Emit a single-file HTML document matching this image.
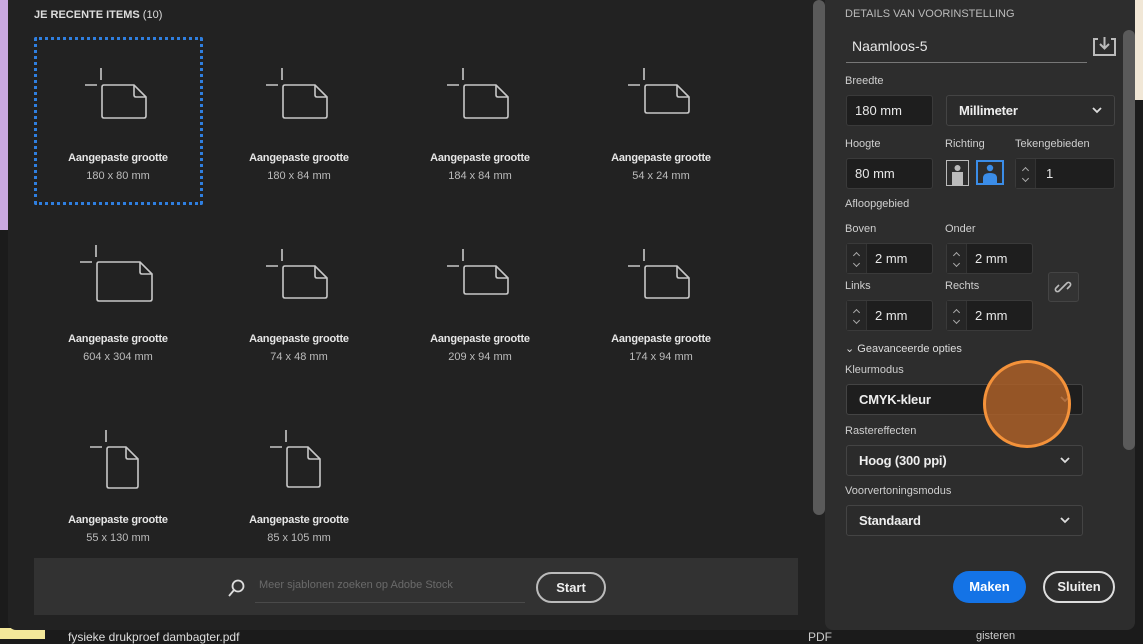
<!DOCTYPE html>
<html><head><meta charset="utf-8"><style>
*{margin:0;padding:0;box-sizing:border-box}
body{width:1143px;height:639px;overflow:hidden;background:#1b1b1b;font-family:"Liberation Sans",sans-serif;position:relative;color:#ddd}
.a{position:absolute}
.lbl{font-size:11px;color:#e6e6e6;text-align:center;width:180px;font-weight:bold;letter-spacing:-0.2px}
.sub{font-size:11px;color:#bcbcbc;text-align:center;width:180px}
.rl{position:absolute;font-size:11px;color:#cfcfcf}
.inp{position:absolute;background:#1e1e1e;border:1px solid #3a3a3a;border-radius:3px;font-size:13px;color:#e8e8e8;padding-left:8px;display:flex;align-items:center}
.dd{position:absolute;border:1px solid #444;border-radius:3px;background:#2b2b2b;font-size:13px;color:#eee;font-weight:bold;padding-left:12px;display:flex;align-items:center;letter-spacing:-0.2px}
.chev{position:absolute;right:12px;top:50%;margin-top:-4px}
.step{position:absolute;left:0;top:0;width:20px;height:100%;border-right:1px solid #333;background:#262626}
.step::before{content:"";position:absolute;left:7px;top:9px;width:4px;height:4px;border-left:1.3px solid #aaa;border-top:1.3px solid #aaa;transform:rotate(45deg)}
.step::after{content:"";position:absolute;left:7px;top:17px;width:4px;height:4px;border-right:1.3px solid #aaa;border-bottom:1.3px solid #aaa;transform:rotate(45deg)}
</style></head><body>
<div class="a" style="left:0;top:0;width:8px;height:230px;background:#c9a8e0"></div>
<div class="a" style="left:0;top:628px;width:45px;height:11px;background:#f3e79a"></div>
<div class="a" style="left:1135px;top:0;width:8px;height:100px;background:#f1e7d6"></div>
<div class="a" style="left:8px;top:0;width:1127px;height:630px;background:#222;border-radius:0 0 8px 8px"></div>
<div class="a" style="left:68px;top:630px;font-size:12px;color:#ddd">fysieke drukproef dambagter.pdf</div>
<div class="a" style="left:808px;top:630px;font-size:12px;color:#ccc">PDF</div>
<div class="a" style="left:976px;top:630px;font-size:11px;color:#ccc">gisteren</div>
<div class="a" style="left:34px;top:9px;font-size:11px;color:#ddd;font-weight:bold">JE RECENTE ITEMS <span style="font-weight:normal">(10)</span></div>
<div class="a" style="left:34px;top:37px;width:169px;height:168px;border:3px dotted #2f7fe0;border-radius:2px"></div>
<svg class="a" style="left:0;top:0" width="810" height="560" fill="none" stroke="#c8c8c8" stroke-width="1.6">
<g id="ic"></g>
</svg>
<div id="tiles"></div>
<div class="a" style="left:813px;top:0;width:12px;height:515px;background:#5a5a5a;border-radius:6px"></div>
<div class="a" style="left:825px;top:0;width:310px;height:630px;background:#2d2d2d;border-radius:0 0 8px 8px"></div>
<div class="a" style="left:1123px;top:30px;width:12px;height:420px;background:#5a5a5a;border-radius:6px"></div>
<div class="a" style="left:34px;top:558px;width:764px;height:57px;background:#323232"></div>
<svg class="a" style="left:227px;top:578px" width="20" height="20" fill="none" stroke="#ddd" stroke-width="1.8"><circle cx="11" cy="8" r="5.5"/><path d="M7 12 2 18"/></svg>
<div class="a" style="left:259px;top:579px;font-size:11px;color:#6a6a6a">Meer sjablonen zoeken op Adobe Stock</div>
<div class="a" style="left:255px;top:602px;width:270px;height:1px;background:#4a4a4a"></div>
<div class="a" style="left:536px;top:572px;width:70px;height:31px;border:2px solid #bbb;border-radius:16px;font-size:13px;font-weight:bold;color:#eee;text-align:center;line-height:27px">Start</div>

<div class="rl" style="left:845px;top:8px;color:#bbb">DETAILS VAN VOORINSTELLING</div>
<div class="a" style="left:852px;top:38px;font-size:14px;color:#e8e8e8">Naamloos-5</div>
<div class="a" style="left:846px;top:62px;width:241px;height:1px;background:#777"></div>
<svg class="a" style="left:1093px;top:36px" width="23" height="20" fill="none" stroke="#bbb" stroke-width="2"><path d="M5 3H1v16h21V3h-4M11.5 1v11M7 8l4.5 4.5L16 8"/></svg>
<div class="rl" style="left:845px;top:75px">Breedte</div>
<div class="inp" style="left:846px;top:95px;width:87px;height:31px">180 mm</div>
<div class="dd" style="left:946px;top:95px;width:169px;height:31px">Millimeter<svg class="chev" width="10" height="7" fill="none" stroke="#ddd" stroke-width="1.8"><path d="M1 1l4 4 4-4"/></svg></div>
<div class="rl" style="left:845px;top:138px">Hoogte</div>
<div class="rl" style="left:945px;top:138px">Richting</div>
<div class="rl" style="left:1015px;top:138px">Tekengebieden</div>
<div class="inp" style="left:846px;top:158px;width:87px;height:31px">80 mm</div>
<svg class="a" style="left:946px;top:160px" width="60" height="26"><rect x="0.5" y="0.5" width="22" height="25" fill="none" stroke="#bbb"/><circle cx="11.5" cy="8" r="3" fill="#bbb"/><rect x="6" y="12" width="11" height="13" fill="#bbb"/><rect x="31" y="1" width="26" height="23" fill="none" stroke="#3b8de8" stroke-width="2"/><circle cx="44" cy="8" r="3.2" fill="#3b8de8"/><path d="M37 23v-5q0-5 7-5t7 5v5z" fill="#3b8de8"/></svg>
<div class="inp" style="left:1015px;top:158px;width:100px;height:31px;padding-left:30px"><div class="step"></div>1</div>
<div class="rl" style="left:845px;top:198px">Afloopgebied</div>
<div class="rl" style="left:845px;top:223px">Boven</div>
<div class="rl" style="left:945px;top:223px">Onder</div>
<div class="inp" style="left:846px;top:243px;width:87px;height:31px;padding-left:28px"><div class="step"></div>2 mm</div>
<div class="inp" style="left:946px;top:243px;width:87px;height:31px;padding-left:28px"><div class="step"></div>2 mm</div>
<div class="rl" style="left:845px;top:280px">Links</div>
<div class="rl" style="left:945px;top:280px">Rechts</div>
<div class="inp" style="left:846px;top:300px;width:87px;height:31px;padding-left:28px"><div class="step"></div>2 mm</div>
<div class="inp" style="left:946px;top:300px;width:87px;height:31px;padding-left:28px"><div class="step"></div>2 mm</div>
<div class="a" style="left:1048px;top:272px;width:31px;height:30px;border:1px solid #444;border-radius:3px;background:#333"></div>
<svg class="a" style="left:1054px;top:278px" width="18" height="18" fill="none" stroke="#bbb" stroke-width="1.6"><path d="M8 10l-3 3a2 2 0 0 1-3-3l3-3M10 8l3-3a2 2 0 0 1 3 3l-3 3M7 11l4-4"/></svg>
<div class="rl" style="left:845px;top:342px;color:#ddd">⌄ Geavanceerde opties</div>
<div class="rl" style="left:845px;top:364px">Kleurmodus</div>
<div class="dd" style="left:846px;top:384px;width:237px;height:31px;background:#1e1e1e">CMYK-kleur<svg class="chev" width="10" height="7" fill="none" stroke="#ddd" stroke-width="1.8"><path d="M1 1l4 4 4-4"/></svg></div>
<div class="rl" style="left:845px;top:425px">Rastereffecten</div>
<div class="dd" style="left:846px;top:445px;width:237px;height:31px">Hoog (300 ppi)<svg class="chev" width="10" height="7" fill="none" stroke="#ddd" stroke-width="1.8"><path d="M1 1l4 4 4-4"/></svg></div>
<div class="rl" style="left:845px;top:485px">Voorvertoningsmodus</div>
<div class="dd" style="left:846px;top:505px;width:237px;height:31px">Standaard<svg class="chev" width="10" height="7" fill="none" stroke="#ddd" stroke-width="1.8"><path d="M1 1l4 4 4-4"/></svg></div>
<div class="a" style="left:983px;top:360px;width:88px;height:88px;border-radius:50%;background:rgba(170,95,40,0.85);border:3px solid #f4923a"></div>
<div class="a" style="left:953px;top:571px;width:73px;height:32px;border-radius:16px;background:#1473e6;color:#fff;font-size:13px;font-weight:bold;text-align:center;line-height:32px">Maken</div>
<div class="a" style="left:1043px;top:571px;width:72px;height:32px;border-radius:16px;border:2px solid #ddd;color:#eee;font-size:13px;font-weight:bold;text-align:center;line-height:28px">Sluiten</div>
<script>
var docs=[[102,85,146,118],[283,85,327,118],[464,85,508,118],[645,85,689,113],[97,262,152,301],[283,266,327,298],[464,266,508,294],[645,266,689,298],[107,447,138,488],[287,447,320,487]];
var s='';docs.forEach(function(d){var l=d[0],t=d[1],r=d[2],b=d[3];
s+='<path d="M'+(l-1)+' '+(t-17)+'v12M'+(l-17)+' '+t+'h12"/>';
s+='<path d="M'+l+' '+(t+2)+'q0-2 2-2H'+(r-12)+'L'+r+' '+(t+12)+'V'+(b-2)+'q0 2-2 2H'+(l+2)+'q-2 0-2-2Z"/>';
s+='<path d="M'+(r-12)+' '+t+'v10q0 2 2 2h10"/>';});
document.getElementById('ic').innerHTML=s;
var labs=[['180 x 80 mm',118,152],['180 x 84 mm',299,152],['184 x 84 mm',480,152],['54 x 24 mm',661,152],['604 x 304 mm',118,333],['74 x 48 mm',299,333],['209 x 94 mm',480,333],['174 x 94 mm',661,333],['55 x 130 mm',118,514],['85 x 105 mm',299,514]];
var h='';labs.forEach(function(a){h+='<div class="a lbl" style="left:'+(a[1]-90)+'px;top:'+a[2]+'px">Aangepaste grootte</div><div class="a sub" style="left:'+(a[1]-90)+'px;top:'+(a[2]+18)+'px">'+a[0]+'</div>';});
document.getElementById('tiles').innerHTML=h;
</script>
</body></html>
